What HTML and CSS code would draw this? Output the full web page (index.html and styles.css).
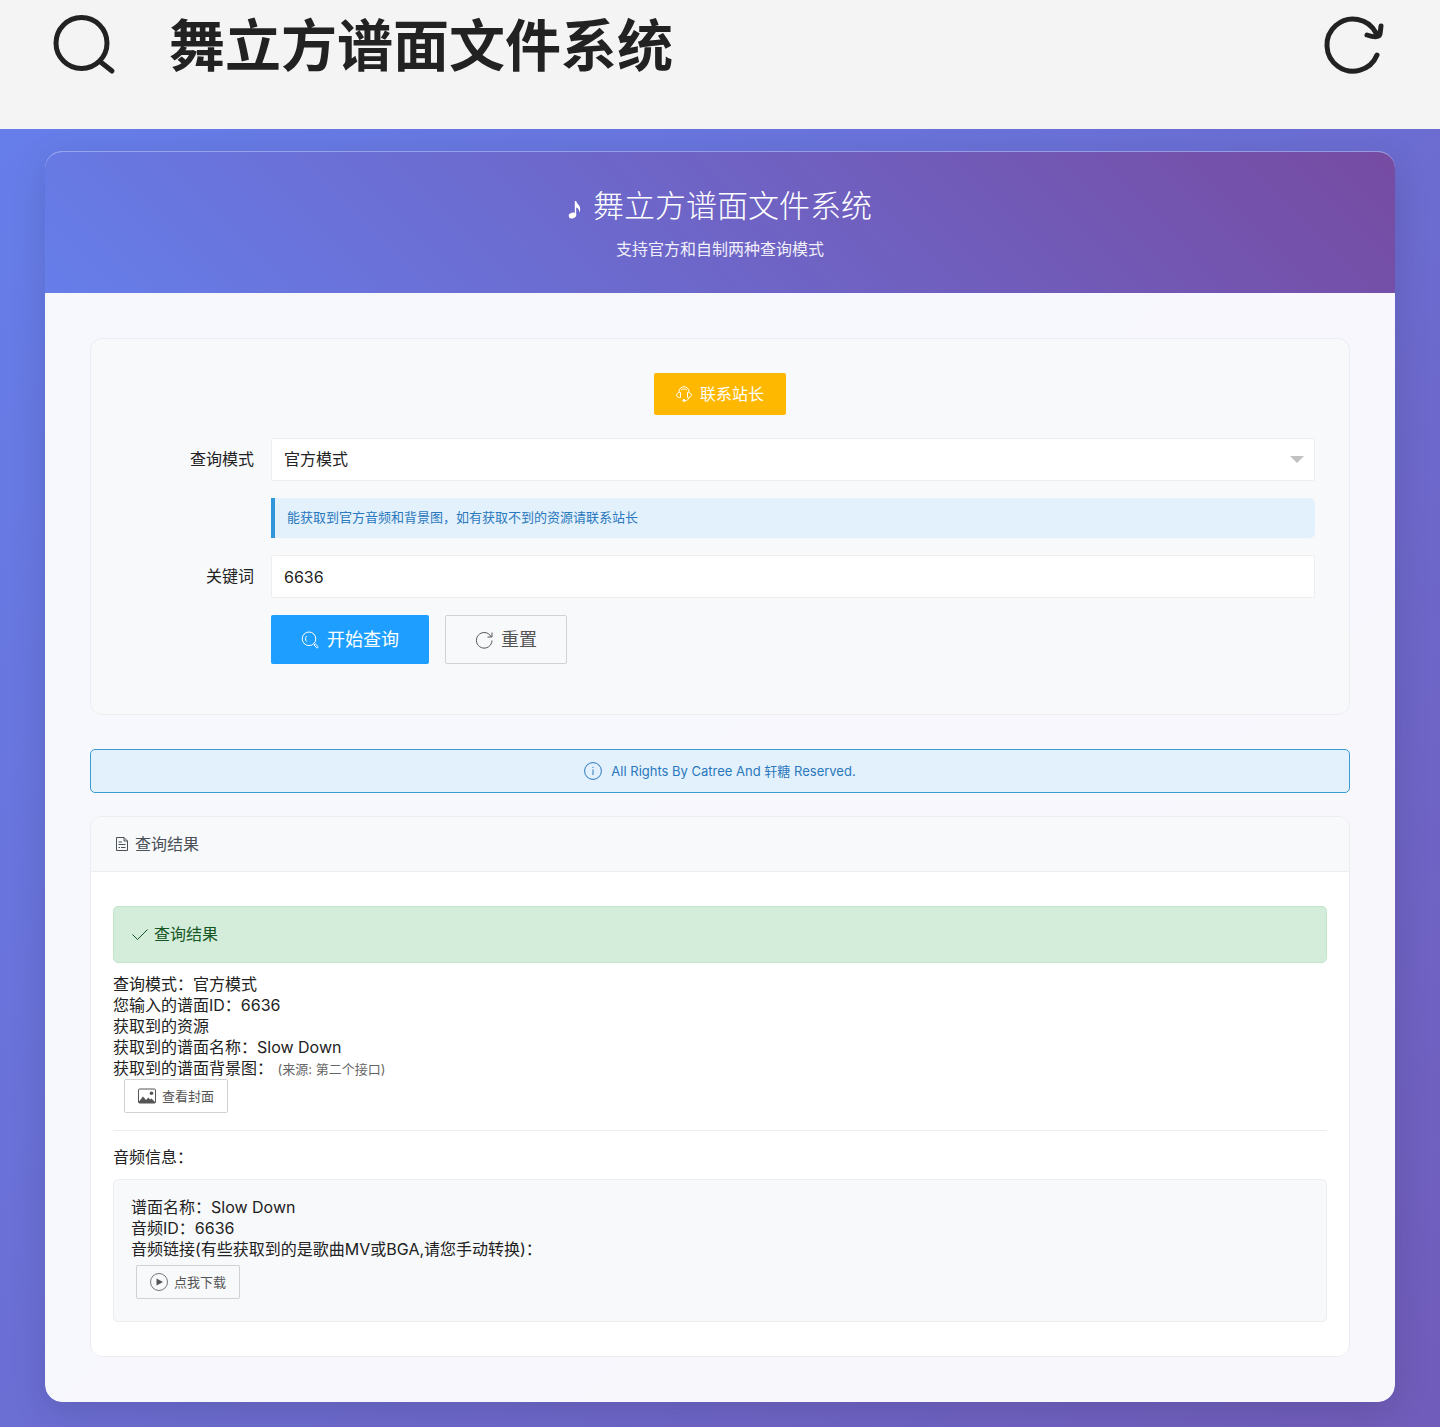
FILE: index.html
```html
<!DOCTYPE html>
<html lang="zh-CN">
  <head>
    <meta charset="UTF-8" />
    <meta name="viewport" content="width=device-width, initial-scale=1.0" />
    <title>舞立方谱面文件系统</title>
    <link rel="stylesheet" href="styles.css">
  </head>
  <body>
    <header class="topbar">
      <button type="button" class="topbar-btn" aria-label="搜索">
        <svg viewBox="0 0 64 64" width="64" height="64" fill="none" stroke="currentColor" stroke-width="5" stroke-linecap="round">
          <circle cx="29.500" cy="29" r="25.500" />
          <path d="M48 47.500L60 57" />
        </svg>
      </button>
      <h1 class="topbar-title">舞立方谱面文件系统</h1>
      <button type="button" class="topbar-btn" aria-label="刷新">
        <svg viewBox="0 0 64 64" width="64" height="64" fill="none" stroke="currentColor" stroke-width="5" stroke-linecap="round" stroke-linejoin="round">
          <path d="M56 41A26 26 0 1 1 55 19" />
          <path d="M46 21C52 23 58 24 59 20L60 12" />
        </svg>
      </button>
    </header>

    <main class="page">
      <div class="container">
        <div class="banner">
          <h2 class="banner-title">
            <svg viewBox="0 0 14 20" width="14" height="20" fill="currentColor" aria-hidden="true">
              <ellipse cx="4.500" cy="15.500" rx="3.800" ry="2.800" transform="rotate(-18 4.500 15.500)" />
              <path d="M6.800 1H8.200C8.500 4 12.600 5 12.200 9.500C12.100 10.800 11.700 11.700 11 12.500C11.500 9.500 10 8 8.200 7.500V15H6.800Z" />
            </svg>
            舞立方谱面文件系统
          </h2>
          <p class="banner-text">支持官方和自制两种查询模式</p>
        </div>

        <div class="content">
          <form action="#" class="panel" id="queryForm">
            <div class="contact">
              <button type="button" class="btn btn-warm">
                <svg viewBox="0 0 16 16" width="16" height="16" fill="none" stroke="currentColor" aria-hidden="true">
                  <path d="M3 6C3 -1 13 -1 13 6M5 4C6.500 2.700 9.500 2.700 11 4" />
                  <path d="M4.500 6.500V11.500H3.500C-.3 11.500 -.3 6.500 3.500 6.500ZM11.500 6.500V11.500H12.500C16.300 11.500 16.300 6.500 12.500 6.500Z" />
                  <path d="M13 11.500C12.500 13.500 11 14.800 8.500 14.800" />
                  <circle cx="8" cy="14.500" r="1" fill="currentColor" />
                </svg>
                联系站长
              </button>
            </div>
            <div class="form-item">
              <label for="mode">查询模式</label>
              <div class="select-wrap">
                <select id="mode" name="mode">
                  <option selected>官方模式</option>
                  <option>自制模式</option>
                </select>
              </div>
            </div>
            <div class="form-item">
              <p class="hint">能获取到官方音频和背景图，如有获取不到的资源请联系站长</p>
            </div>
            <div class="form-item">
              <label for="keyword">关键词</label>
              <input type="text" id="keyword" name="keyword" value="6636" autocomplete="off" />
            </div>
            <div class="form-item">
              <div class="actions">
                <button type="submit" class="btn btn-lg btn-normal">
                  <svg viewBox="0 0 18 18" width="18" height="18" fill="none" stroke="currentColor" aria-hidden="true">
                    <circle cx="8" cy="7.800" r="6.800" />
                    <path d="M5.500 5C4.200 6.500 4.200 9 5.500 10.500M12.600 12.600L13.500 13.500" />
                    <path d="M14.200 12.800L17 15.600C17.500 16.300 16.500 17.300 15.800 16.800L13 14Z" />
                  </svg>
                  开始查询
                </button>
                <button type="reset" class="btn btn-lg btn-primary">
                  <svg viewBox="0 0 18 18" width="18" height="18" fill="none" stroke="currentColor" aria-hidden="true">
                    <path d="M17 9.500A7.800 7.800 0 1 1 16 5.500M17 1.500V6H12.500" />
                  </svg>
                  重置
                </button>
              </div>
            </div>
          </form>

          <div class="notice">
            <svg viewBox="0 0 18 18" width="18" height="18" fill="none" stroke="currentColor" aria-hidden="true">
              <circle cx="9" cy="9" r="8.400" />
              <path d="M9 7.500V13M9 4.800V6" />
            </svg>
            <span>All Rights By Catree And 轩糖 Reserved.</span>
          </div>

          <section class="result">
            <h3 class="result-title">
              <svg viewBox="0 0 14 14" width="14" height="14" fill="none" stroke="currentColor" aria-hidden="true">
                <path d="M1.500 .5H9L12.500 4V13.500H1.500ZM9 .5V4H12.500M3.500 5H7M3.500 7.500H10.500M3.500 10.500H5M6 10.500H10.500" />
              </svg>
              查询结果
            </h3>
            <div class="result-body">
              <div class="success">
                <svg viewBox="0 0 16 16" width="16" height="16" fill="none" stroke="currentColor" aria-hidden="true">
                  <path d="M.5 7.500L5.500 12.500L15.500 2.500" />
                </svg>
                查询结果
              </div>
              <div class="info">
                <p><strong>查询模式：</strong>官方模式</p>
                <p><strong>您输入的谱面ID：</strong>6636</p>
                <p><strong>获取到的资源</strong></p>
                <p><strong>获取到的谱面名称：</strong>Slow Down</p>
                <p><strong>获取到的谱面背景图：</strong> <small>(来源: 第二个接口)</small></p>
              </div>
              <a href="#cover" class="btn btn-sm btn-primary cover">
                <svg viewBox="0 0 18 16" width="18" height="16" fill="none" stroke="currentColor" aria-hidden="true">
                  <rect x=".5" y="1" width="17" height="14" rx="1" />
                  <path d="M1 15V13.500L5 8.500L8 12L10.500 9.500L12 11.500L13.500 10.500L17 14V15Z" fill="currentColor" stroke="none" />
                  <circle cx="13.500" cy="5.200" r="1.800" fill="currentColor" stroke="none" />
                </svg>
                查看封面
              </a>
              <hr>
              <h4 class="audio-title">音频信息：</h4>
              <div class="audio">
                <p><strong>谱面名称：</strong>Slow Down</p>
                <p><strong>音频ID：</strong>6636</p>
                <p><strong>音频链接(有些获取到的是歌曲MV或BGA,请您手动转换)：</strong></p>
                <a href="#download" class="btn btn-sm btn-primary download">
                  <svg viewBox="0 0 18 18" width="18" height="18" fill="none" stroke="currentColor" aria-hidden="true">
                    <circle cx="9" cy="9" r="8.500" stroke-width=".8" />
                    <path d="M6.500 5.500L13 9L6.500 12.500Z" fill="currentColor" stroke="none" />
                  </svg>
                  点我下载
                </a>
              </div>
            </div>
          </section>
        </div>
      </div>
    </main>
  </body>
</html>
```

FILE: styles.css
```css
* {
  box-sizing: border-box;
  margin: 0;
  padding: 0;
}
body {
  display: flex;
  flex-direction: column;
  min-height: 100vh;
  font-family: Inter, 'Noto Sans CJK SC', sans-serif;
  font-size: 16px;
  line-height: 21px;
  color: #222;
}
button,
input,
select {
  font: inherit;
  color: inherit;
}
svg {
  flex: none;
}
.topbar {
  display: flex;
  align-items: flex-start;
  padding: 14px 55px 0 52px;
  height: 129px;
  background: #f4f4f4;
}
.topbar-btn {
  height: 64px;
  border: none;
  background: none;
  color: #222;
  cursor: pointer;
}
.topbar-title {
  flex: 1;
  margin-left: 53px;
  font-size: 56px;
  font-weight: 700;
  line-height: 64px;
}
.page {
  flex: 1;
  padding: 22px 45px 25px;
  background: linear-gradient(135deg, #667eea 0%, #764ba2 150%);
}
.container {
  overflow: hidden;
  border-top: 1px solid rgba(255, 255, 255, 0.3);
  border-radius: 17px;
  background: rgba(255, 255, 255, 0.95);
  background-clip: padding-box;
  box-shadow: 0 9px 36px rgba(0, 0, 0, 0.12);
}

/* banner */
.banner {
  padding: 33px 34px;
  background: linear-gradient(45deg, #667eea, #764ba2);
  color: #fff;
  text-align: center;
}
.banner-title {
  display: flex;
  justify-content: center;
  align-items: center;
  gap: 11px;
  font-size: 31px;
  font-weight: 300;
  line-height: 42px;
}
.banner-title svg {
  margin-top: 8px;
}
.banner-text {
  margin-top: 12px;
  opacity: 0.9;
}
.content {
  padding: 45px;
}

/* query form */
.panel {
  padding: 34px 34px 50px;
  border: 1px solid #ebedf0;
  border-radius: 12px;
  background: #f8f9fb;
}
.contact {
  margin-bottom: 23px;
  text-align: center;
}
.form-item {
  display: grid;
  grid-template-columns: 146px 1fr;
  align-items: center;
  margin-top: 17px;
}
.form-item label {
  padding-right: 17px;
  text-align: right;
}
.form-item > :only-child {
  grid-column: 2;
}
.form-item input,
.form-item select {
  width: 100%;
  height: 43px;
  padding: 0 12px;
  border: 1px solid #eee;
  border-radius: 2px;
  background: #fff;
  appearance: none;
}
.select-wrap {
  position: relative;
}
.select-wrap::after {
  content: '';
  position: absolute;
  top: 18px;
  right: 11px;
  border: 7px solid transparent;
  border-top-color: #c2c2c2;
  pointer-events: none;
}
.hint {
  padding: 9px 12px 10px;
  border-left: 4px solid #2f96d8;
  border-radius: 0 5px 5px 0;
  background: #e3f1fc;
  color: #2a78bd;
  font-size: 13px;
}
.actions {
  display: flex;
  gap: 16px;
}

/* buttons */
.btn {
  display: inline-flex;
  align-items: center;
  justify-content: center;
  gap: 8px;
  height: 42px;
  padding: 0 22px;
  border: none;
  border-radius: 2px;
  color: #fff;
  text-decoration: none;
  white-space: nowrap;
  cursor: pointer;
  vertical-align: top;
}
.btn-warm {
  background: #ffb800;
}
.btn-normal {
  background: #1e9fff;
}
.btn-primary {
  border: 1px solid #d2d2d2;
  background: transparent;
  color: #555;
}
.btn-lg {
  height: 49px;
  padding: 0 30px;
  font-size: 18px;
}
.btn-lg.btn-primary {
  padding: 0 29px;
}
.btn-sm {
  gap: 6px;
  height: 34px;
  padding: 0 13px;
  font-size: 13px;
}

.notice {
  display: flex;
  justify-content: center;
  align-items: center;
  gap: 9px;
  margin: 34px 0 23px;
  height: 44px;
  border: 1px solid #3c9bd0;
  border-radius: 5px;
  background: #e3f1fc;
  color: #2a78bd;
  font-size: 13px;
}

/* result card */
.result {
  overflow: hidden;
  border: 1px solid #ebedf0;
  border-radius: 12px;
  background: #fff;
}
.result-title {
  display: flex;
  align-items: center;
  gap: 6px;
  height: 55px;
  padding: 0 24px;
  border-bottom: 1px solid #eee;
  background: #f8f9fb;
  color: #495057;
  font-size: 16px;
  font-weight: 400;
}
.result-body {
  padding: 34px 22px;
}
.success {
  display: flex;
  align-items: center;
  gap: 6px;
  height: 57px;
  margin-bottom: 11px;
  padding: 0 18px;
  border: 1px solid #c3e6cb;
  border-radius: 5px;
  background: #d4edda;
  color: #155724;
}
strong {
  font-weight: 400;
}
small {
  color: #666;
  font-size: 13px;
  line-height: 1;
}
.cover {
  margin-left: 11px;
}
hr {
  margin: 17px 0 16px;
  border: none;
  border-top: 1px solid #eee;
}
.audio-title {
  margin-bottom: 11px;
  font-size: 16px;
  font-weight: 400;
}
.audio {
  padding: 17px;
  border: 1px solid #ebedf0;
  border-radius: 5px;
  background: #f8f9fb;
}
.download {
  margin: 5px;
}
```
